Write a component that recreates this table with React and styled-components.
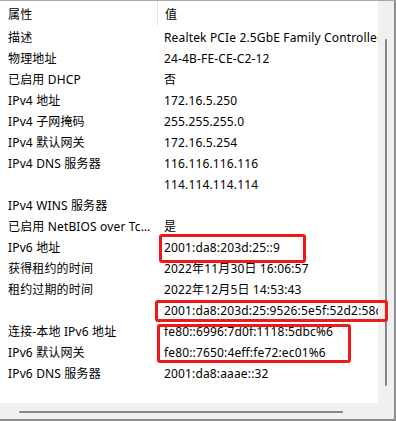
import styled, { createGlobalStyle } from 'styled-components';

const GlobalStyle = createGlobalStyle`
  html, body {
    margin: 0;
    padding: 0;
    background: #ffffff;
  }
  body {
    font-family: 'Noto Sans', 'Noto Sans CJK SC', sans-serif;
    font-size: 12px;
    color: #000000;
  }
`;

const Frame = styled.div`
  position: relative;
  width: 396px;
  height: 421px;
  box-sizing: border-box;
  border-top: 1px solid #a7a7a7;
  border-right: 2px solid #8c8c8c;
  border-bottom: 2px solid #8c8c8c;
  display: grid;
  grid-template-columns: 1fr 16px;
  grid-template-rows: 1fr 16px;
  background: #ffffff;
  overflow: hidden;
`;

const Viewport = styled.div`
  overflow: hidden;
  min-width: 0;
  min-height: 0;
`;

const ListGrid = styled.div`
  display: grid;
  grid-template-columns: 157px 420px;
  grid-template-rows: 25px;
  grid-auto-rows: 21px;
  letter-spacing: 0.15px;
`;

const HeaderCell = styled.div`
  padding-top: 3px;
  line-height: 22px;
  padding-left: ${(p) => (p.$value ? '7px' : '8px')};
  border-left: ${(p) => (p.$value ? '1px solid #e5e5e5' : 'none')};
  white-space: nowrap;
`;

const Cell = styled.div`
  padding-top: 2px;
  line-height: 19px;
  padding-left: ${(p) => (p.$value ? '7px' : '8px')};
  padding-right: ${(p) => (p.$value ? '0' : '3px')};
  white-space: nowrap;
  overflow: hidden;
  text-overflow: ${(p) => (p.$value ? 'clip' : 'ellipsis')};
`;

const VTrack = styled.div`
  background: #f0f0f0;
  display: flex;
  justify-content: center;
  padding-top: 38px;
  padding-bottom: 17px;
`;

const VThumb = styled.div`
  width: 2px;
  margin-right: 1px;
  background: #858585;
  border-radius: 1px;
`;

const HTrack = styled.div`
  background: #f0f0f0;
  display: flex;
  align-items: center;
  padding-left: 19px;
  padding-right: 35px;
  padding-top: 2px;
`;

const HThumb = styled.div`
  height: 2px;
  flex: 1;
  background: #858585;
  border-radius: 1px;
`;

const Corner = styled.div`
  background: #f0f0f0;
`;

const Mark = styled.div`
  position: absolute;
  box-sizing: border-box;
  border: 3px solid #f01818;
  border-radius: 3px;
  pointer-events: none;
`;

const rows = [
  ['描述', 'Realtek PCIe 2.5GbE Family Controller'],
  ['物理地址', '24-4B-FE-CE-C2-12'],
  ['已启用 DHCP', '否'],
  ['IPv4 地址', '172.16.5.250'],
  ['IPv4 子网掩码', '255.255.255.0'],
  ['IPv4 默认网关', '172.16.5.254'],
  ['IPv4 DNS 服务器', '116.116.116.116'],
  ['', '114.114.114.114'],
  ['IPv4 WINS 服务器', ''],
  ['已启用 NetBIOS over Tcpip', '是'],
  ['IPv6 地址', '2001:da8:203d:25::9'],
  ['获得租约的时间', '2022年11月30日 16:06:57'],
  ['租约过期的时间', '2022年12月5日 14:53:43'],
  ['', '2001:da8:203d:25:9526:5e5f:52d2:58c1'],
  ['连接-本地 IPv6 地址', 'fe80::6996:7d0f:1118:5dbc%6'],
  ['IPv6 默认网关', 'fe80::7650:4eff:fe72:ec01%6'],
  ['IPv6 DNS 服务器', '2001:da8:aaae::32'],
];

// highlight frames drawn over the list
const marks = [
  { left: 159, top: 233, width: 147, height: 29 },
  { left: 155, top: 299, width: 233, height: 22 },
  { left: 157, top: 323, width: 194, height: 39 },
];

export default function App() {
  return (
    <>
      <GlobalStyle />
      <Frame>
        <Viewport>
          <ListGrid>
            <HeaderCell>属性</HeaderCell>
            <HeaderCell $value>值</HeaderCell>
            {rows.map(([name, value], i) => [
              <Cell key={`n${i}`}>{name}</Cell>,
              <Cell key={`v${i}`} $value>
                {value}
              </Cell>,
            ])}
          </ListGrid>
        </Viewport>
        <VTrack>
          <VThumb />
        </VTrack>
        <HTrack>
          <HThumb />
        </HTrack>
        <Corner />
        {marks.map((m, i) => (
          <Mark key={i} style={m} />
        ))}
      </Frame>
    </>
  );
}
